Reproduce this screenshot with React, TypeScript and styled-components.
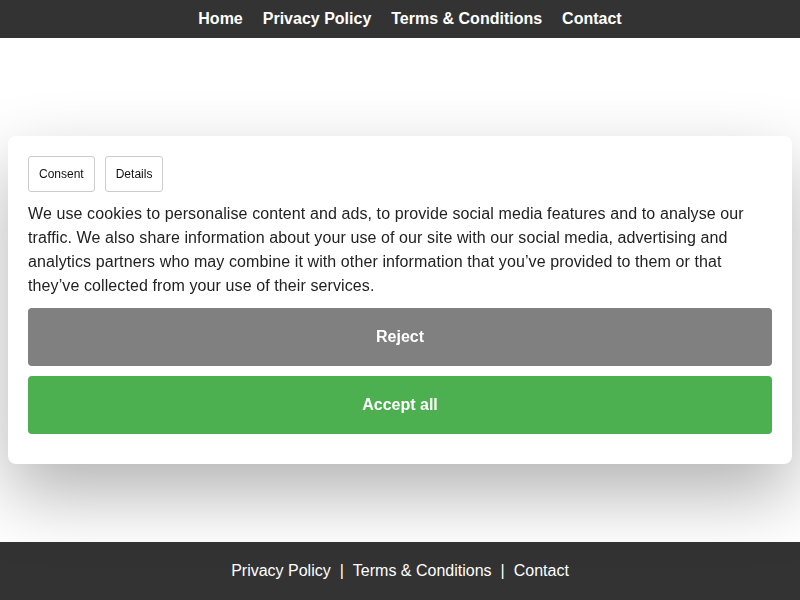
import React from "react";
import styled, { createGlobalStyle } from "styled-components";

const Global = createGlobalStyle`
  html, body { margin: 0; padding: 0; height: 100%; }
  body { font-family: "Liberation Sans", Arial, sans-serif; background: #fff; color: #222; }
  #root { min-height: 100%; }
`;

const Page = styled.div`
  display: flex;
  flex-direction: column;
  min-height: 100vh;
`;

const Header = styled.header`
  background: #333;
  display: flex;
  justify-content: center;
  padding: 10px 0 10px 20px;
`;

const NavLink = styled.a`
  color: #fff;
  font-weight: bold;
  font-size: 16px;
  line-height: 18px;
  padding: 0 10px;
  text-decoration: none;
`;

const Main = styled.main`
  flex: 1;
`;

const Footer = styled.footer`
  background: #333;
  color: #fff;
  display: flex;
  justify-content: center;
  align-items: center;
  padding: 20px 0;
  font-size: 16px;
  line-height: 18px;
`;

const FooterLink = styled.a`
  color: #fff;
  text-decoration: none;
`;

const Sep = styled.span`
  margin: 0 9px;
`;

const Overlay = styled.div`
  position: fixed;
  inset: 0;
  display: flex;
  align-items: center;
  justify-content: center;
  pointer-events: none;
`;

const Card = styled.div`
  pointer-events: auto;
  width: calc(100% - 16px);
  box-sizing: border-box;
  background: #fff;
  border-radius: 8px;
  padding: 20px;
  box-shadow: 0 30px 70px rgba(0, 0, 0, 0.3);
`;

const Tabs = styled.div`
  display: flex;
  gap: 10px;
`;

const Tab = styled.button`
  font-family: "Liberation Sans", Arial, sans-serif;
  font-size: 12px;
  line-height: 14px;
  color: #111;
  background: #fff;
  border: 1px solid #ccc;
  border-radius: 3px;
  padding: 10px 10px;
`;

const Text = styled.p`
  margin: 10px 0 10px;
  font-size: 16px;
  line-height: 24px;
  letter-spacing: 0.1px;
  color: #222;
`;

const Action = styled.button<{ $bg: string }>`
  display: block;
  width: 100%;
  font-family: "Liberation Sans", Arial, sans-serif;
  font-size: 16px;
  font-weight: bold;
  line-height: 18px;
  color: #fff;
  background: ${(p) => p.$bg};
  border: none;
  border-radius: 4px;
  padding: 20px;
  margin-bottom: 10px;
`;

export default function App() {
  return (
    <>
      <Global />
      <Page>
        <Header>
          <NavLink href="#">Home</NavLink>
          <NavLink href="#">Privacy Policy</NavLink>
          <NavLink href="#">Terms &amp; Conditions</NavLink>
          <NavLink href="#">Contact</NavLink>
        </Header>
        <Main />
        <Footer>
          <FooterLink href="#">Privacy Policy</FooterLink>
          <Sep>|</Sep>
          <FooterLink href="#">Terms &amp; Conditions</FooterLink>
          <Sep>|</Sep>
          <FooterLink href="#">Contact</FooterLink>
        </Footer>
      </Page>
      <Overlay>
        <Card>
          <Tabs>
            <Tab>Consent</Tab>
            <Tab>Details</Tab>
          </Tabs>
          <Text>
            We use cookies to personalise content and ads, to provide social media features and to analyse our
            traffic. We also share information about your use of our site with our social media, advertising and
            analytics partners who may combine it with other information that you’ve provided to them or that
            they’ve collected from your use of their services.
          </Text>
          <Action $bg="#808080">Reject</Action>
          <Action $bg="#4caf50">Accept all</Action>
        </Card>
      </Overlay>
    </>
  );
}
